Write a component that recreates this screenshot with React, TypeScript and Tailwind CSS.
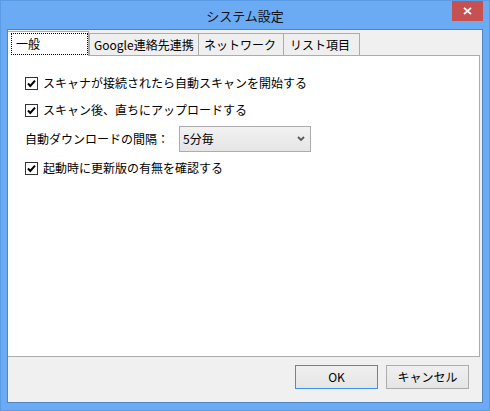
import React from "react";

function Check() {
  return (
    <span className="w-[13px] h-[13px] border border-[#333333] bg-white flex items-center justify-center shrink-0">
      <svg width="11" height="11" viewBox="0 0 11 11">
        <path d="M2 5.5 L4.3 8 L9 2.6" fill="none" stroke="#000" strokeWidth="2" />
      </svg>
    </span>
  );
}

function CheckRow({ label, className = "" }: { label: string; className?: string }) {
  return (
    <div className={"flex items-center h-[18px] " + className}>
      <Check />
      <span className="ml-[5px] text-[12px] leading-[18px] whitespace-nowrap">{label}</span>
    </div>
  );
}

export default function App() {
  return (
    <div className="w-[490px] h-[411px] bg-[#6aabf3] border border-[#5b9be6] flex flex-col font-['Noto_Sans_CJK_JP',sans-serif] text-black select-none">
      {/* Title bar */}
      <div className="h-[28px] relative flex items-center justify-center shrink-0">
        <span className="text-[13px] leading-none text-[#111]">システム設定</span>
        <div className="absolute top-0 right-[6px] w-[31px] h-[20px] bg-[#c75050] flex items-center justify-center">
          <svg width="9" height="8" viewBox="0 0 9 8">
            <path d="M1 0.8 L8 7.2 M8 0.8 L1 7.2" stroke="#fff" strokeWidth="1.8" />
          </svg>
        </div>
      </div>

      {/* Client area */}
      <div className="flex-1 mx-[6px] mb-[7px] border border-[#5284c2] bg-[#f0f0f0] flex flex-col">
        {/* Tabs */}
        <div className="pt-[1px] shrink-0">
          <div className="h-[24px] flex items-end text-[12px] leading-none">
            <div className="relative z-10 w-[81px] h-[25px] -mb-[1px] bg-white border-t border-r border-[#acacac] flex pt-[1px] pl-[3px] pb-[1px]">
              <span className="flex-1 border border-dotted border-black flex items-center pl-[4px] pb-[1px]">一般</span>
            </div>
            <div className="w-[110px] h-[22px] bg-[#efefef] border-t border-l border-r border-[#acacac] flex items-center pl-[4px]">
              Google連絡先連携
            </div>
            <div className="w-[85px] h-[22px] bg-[#efefef] border-t border-r border-[#acacac] flex items-center pl-[5px]">
              ネットワーク
            </div>
            <div className="w-[76px] h-[22px] bg-[#efefef] border-t border-r border-[#acacac] flex items-center pl-[6px]">
              リスト項目
            </div>
          </div>
        </div>

        {/* Panel */}
        <div className="h-[302px] mr-[2px] bg-white border-t border-r border-b border-[#acacac] pl-[17px] pt-[18px] flex flex-col shrink-0">
          <CheckRow label="スキャナが接続されたら自動スキャンを開始する" />
          <CheckRow label="スキャン後、直ちにアップロードする" className="mt-[9px]" />
          <div className="mt-[7px] h-[26px] flex items-center">
            <span className="w-[154px] text-[12px] leading-none whitespace-nowrap">自動ダウンロードの間隔：</span>
            <div className="w-[132px] h-[26px] border border-[#acacac] bg-gradient-to-b from-[#f2f2f2] to-[#e5e5e5] flex items-center justify-between pl-[3px] pr-[5px]">
              <span className="text-[12px] leading-none">5分毎</span>
              <svg width="8" height="6" viewBox="0 0 8 6">
                <path d="M1 1 L4 4 L7 1" fill="none" stroke="#5a5a5a" strokeWidth="1.8" />
              </svg>
            </div>
          </div>
          <CheckRow label="起動時に更新版の有無を確認する" className="mt-[7px]" />
        </div>

        {/* Buttons */}
        <div className="flex-1 flex justify-end items-start gap-[8px] pt-[8px] pr-[13px]">
          <button className="w-[83px] h-[24px] border border-[#3c8fe6] bg-gradient-to-b from-[#f0f0f0] to-[#e5e5e5] text-[12px] leading-none flex items-center justify-center">
            OK
          </button>
          <button className="w-[83px] h-[24px] border border-[#acacac] bg-gradient-to-b from-[#f0f0f0] to-[#e5e5e5] text-[12px] leading-none flex items-center justify-center">
            キャンセル
          </button>
        </div>
      </div>
    </div>
  );
}
